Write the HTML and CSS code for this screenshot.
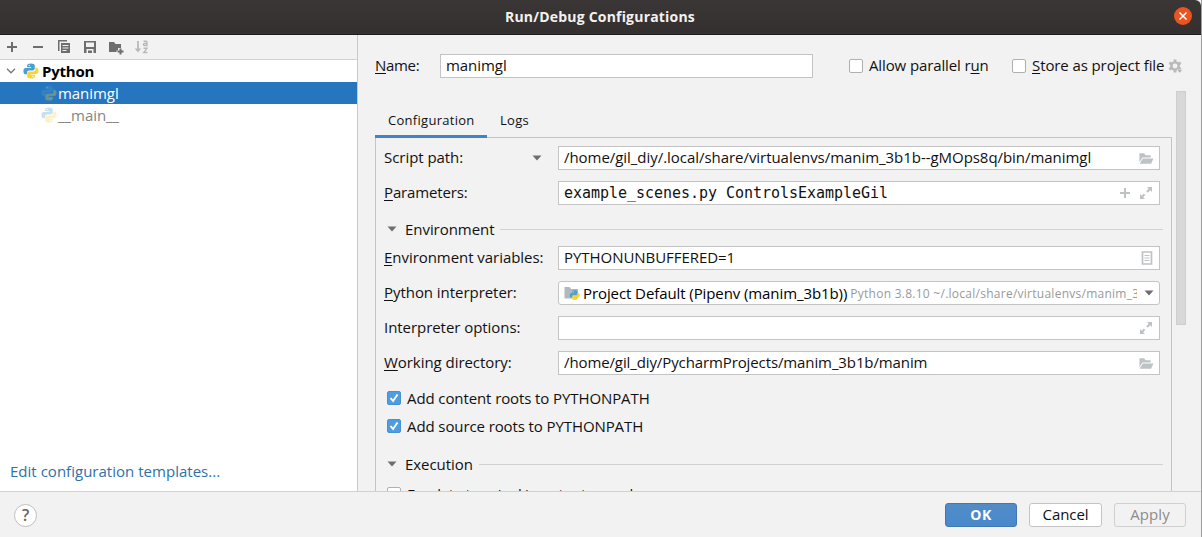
FILE: index.html
```
<!DOCTYPE html>
<html lang="en">
<head>
<meta charset="utf-8">
<title>Run/Debug Configurations</title>
<link rel="stylesheet" href="styles.css">
</head>
<body>
<svg width="0" height="0" class="defs">
  <symbol id="python" viewBox="0.6 0.6 14.8 14.8">
    <path fill="#4b9fcf" d="M7.900 1C5.600 1 4.400 1.700 4.400 3v1.600h3.800v.7H3C1.600 5.300 1 6.500 1 8.200s.7 2.900 2 2.900h1.300V9.400c0-1.100.9-1.900 2-1.900h3.300c1 0 1.900-.7 1.900-1.700V3c0-1.300-1.400-2-3.600-2z"/>
    <path fill="#ffd42b" d="M8.100 15c2.300 0 3.500-.7 3.500-2v-1.600H7.800v-.7H13c1.400 0 2-1.200 2-2.900s-.7-2.900-2-2.900h-1v1.700c0 1.100-.9 1.900-2 1.900H6.500c-1 0-2 .7-2 1.700V13c0 1.300 1.400 2 3.600 2z"/>
    <circle cx="6.300" cy="2.900" r=".6" fill="#fff"/><circle cx="9.700" cy="13.100" r=".6" fill="#fff"/>
  </symbol>
  <symbol id="folder" viewBox="0 0 16 16">
    <path fill="#bdc2c5" d="M1 2.500h5l1.500 2H13V7H4.200L1 12z"/><path fill="#bdc2c5" d="M4.600 8H16l-2.600 5.500H1.200z"/>
  </symbol>
  <symbol id="expand" viewBox="0 0 14 14">
    <path fill="#bdc2c5" d="M8 1h5v5l-1.700-1.700-2.600 2.500-1.500-1.500 2.500-2.600zM1 13V8l1.700 1.700 2.100-2.100 1.500 1.500-2.100 2.200L6 13z"/>
  </symbol>
  <symbol id="down" viewBox="0 0 10 6"><path fill="#6e6e6e" d="M.5.5h9L5 5.500z"/></symbol>
</svg>
<div class="window">
  <header class="titlebar">
    <span class="title">Run/Debug Configurations</span>
    <span class="close"><svg width="10" height="10" viewBox="0 0 10 10"><path d="M1.500 1.500l7 7m0-7l-7 7" stroke="#fff" stroke-width="1.500"/></svg></span>
  </header>
  <div class="main">
    <aside class="sidebar">
      <div class="toolbar">
        <svg viewBox="0 0 16 16"><path d="M8 3v10M3 8h10" stroke="#6e6e6e" stroke-width="2"/></svg>
        <svg viewBox="0 0 16 16"><path d="M3 8h10" stroke="#6e6e6e" stroke-width="2"/></svg>
        <svg viewBox="0 0 16 16"><path fill="#6e6e6e" d="M2 1h9v1.500H3.500V12H2z"/><path fill="#6e6e6e" fill-rule="evenodd" d="M5 4h9v10H5zM6.500 6v1h6V6zm0 2.500v1h6v-1zm0 2.500v1h4v-1z"/></svg>
        <svg viewBox="0 0 16 16"><path fill="#6e6e6e" fill-rule="evenodd" d="M2 2h12v12H2zM4 3.500V8h8V3.500zM4.500 10v4h7v-4zM6 11.500h4V14H6z"/></svg>
        <svg viewBox="0 0 16 16"><path fill="#6e6e6e" d="M1 3h5l1.500 2H13v4h-3v2.500H8.500V13H1z"/><path d="M12.500 9.500v6M9.500 12.500h6" stroke="#6e6e6e" stroke-width="2"/></svg>
        <svg class="sort" viewBox="0 0 16 16" fill="none" stroke="#b9b9b9"><path d="M4 2v9" stroke-width="1.800"/><path d="M.8 9.500h6.400L4 13.500z" fill="#b9b9b9" stroke="none"/><path d="M9.500 2.300h2.700q.8 0 .8.800v3.400h-2.600q-1 0-1-1t1-1H13M9.500 9.300h3.400l-3.200 4.200h3.800" stroke-width="1.400"/></svg>
      </div>
      <ul class="tree">
        <li class="row root"><svg class="chev" viewBox="0 0 10 6"><path d="M1 .8l4 4 4-4" fill="none" stroke="#777" stroke-width="1.300"/></svg><svg class="py"><use href="#python"/></svg><b>Python</b></li>
        <li class="row child selected"><svg class="py faded"><use href="#python"/></svg><span>manimgl</span></li>
        <li class="row child muted"><svg class="py faded"><use href="#python"/></svg><span>__main__</span></li>
      </ul>
      <a class="link">Edit configuration templates...</a>
    </aside>
    <section class="editor">
      <div class="namebar">
        <label class="namelabel"><u>N</u>ame:</label>
        <div class="field namefield"><span>manimgl</span></div>
        <span class="check"></span><span class="parallel">Allow parallel r<u>u</u>n</span>
        <span class="check"></span><span class="store"><u>S</u>tore as project file</span>
        <svg class="gear" viewBox="0 0 16 16"><g stroke="#bababa" fill="none"><circle cx="7.500" cy="7.500" r="3.900" stroke-width="2.600"/><path d="M7.500 .5v3M7.500 11.500v3M1.400 4l2.500 1.400M11.100 9.600l2.500 1.400M1.400 11l2.500-1.400M11.100 5.400L13.600 4" stroke-width="3"/></g><path d="M9.500 11.500h6l-3 3.500z" fill="#aaa" stroke="#f2f2f2" stroke-width=".6"/></svg>
      </div>
      <div class="content">
        <div class="tabbed">
          <nav class="tabs"><span class="tab active">Configuration</span><span class="tab">Logs</span></nav>
          <div class="form">
            <div class="line"><label>Script path:</label><svg class="tri pick"><use href="#down"/></svg><div class="field"><span class="path">/home/gil_diy/.local/share/virtualenvs/manim_3b1b--gMOps8q/bin/manimgl</span><svg class="icon"><use href="#folder"/></svg></div></div>
            <div class="line"><label class="params"><u>P</u>arameters:</label><div class="field mono"><span>example_scenes.py ControlsExampleGil</span><svg class="plus" viewBox="0 0 12 12"><path d="M6 1v10M1 6h10" stroke="#bdc2c5" stroke-width="2"/></svg><svg class="exp"><use href="#expand"/></svg></div></div>
            <div class="group"><svg class="tri"><use href="#down"/></svg><span>Environment</span><i></i></div>
            <div class="line"><label><u>E</u>nvironment variables:</label><div class="field"><span>PYTHONUNBUFFERED=1</span><svg class="doc" viewBox="0 0 12 14"><path d="M1.500 1h9v12h-9z" fill="none" stroke="#bdc2c5" stroke-width="1.700"/><path d="M3.500 4.500h5M3.500 7h5M3.500 9.500h5" stroke="#bdc2c5"/></svg></div></div>
            <div class="line"><label class="up"><u>P</u>ython interpreter:</label><div class="field combo"><svg class="env" viewBox="0 0 16 16"><path d="M.5 2h5L7 4h7v9.500H.5z" fill="#afb9bf"/><svg x="5.500" y="5" width="10.500" height="10.500"><use href="#python"/></svg></svg><span class="sdk">Project Default (Pipenv (manim_3b1b))</span><span class="ver">Python 3.8.10 ~/.local/share/virtualenvs/manim_3</span><svg class="tri"><use href="#down"/></svg></div></div>
            <div class="line"><label>Interpreter options:</label><div class="field"><span></span><svg class="exp"><use href="#expand"/></svg></div></div>
            <div class="line"><label><u>W</u>orking directory:</label><div class="field"><span class="dir">/home/gil_diy/PycharmProjects/manim_3b1b/manim</span><svg class="icon"><use href="#folder"/></svg></div></div>
            <div class="option first"><span class="check on"><svg viewBox="0 0 14 14"><path d="M3.500 7l2.600 3L10.500 3.500" fill="none" stroke="#fff" stroke-width="1.900"/></svg></span><span>Add content roots to PYTHONPATH</span></div>
            <div class="option"><span class="check on"><svg viewBox="0 0 14 14"><path d="M3.500 7l2.600 3L10.500 3.500" fill="none" stroke="#fff" stroke-width="1.900"/></svg></span><span>Add source roots to PYTHONPATH</span></div>
            <div class="group exec"><svg class="tri"><use href="#down"/></svg><span>Execution</span><i></i></div>
            <div class="option last"><span class="check"></span><span>Emulate terminal in output console</span></div>
          </div>
        </div>
        <div class="scrollbar"></div>
      </div>
    </section>
  </div>
  <footer class="footer">
    <span class="help">?</span>
    <button class="btn primary">OK</button>
    <button class="btn cancel">Cancel</button>
    <button class="btn disabled">Apply</button>
  </footer>
</div>
</body>
</html>
```
FILE: styles.css
```
* { box-sizing: border-box; }
body { margin: 0; overflow: hidden; background: #f2f2f2; color: #111; font: 15px/20px "Open Sans", "Noto Sans", sans-serif; letter-spacing: -0.05px; white-space: nowrap; }
.defs { position: absolute; }
svg { flex: none; display: block; }
u { text-decoration: underline; text-decoration-thickness: 1px; text-underline-offset: 2px; text-decoration-skip-ink: none; }

.window { width: 1202px; height: 537px; display: flex; flex-direction: column; border-right: 1px solid #9d9d9d; }
.titlebar { height: 35px; flex: none; display: grid; grid-template-columns: 1fr auto 1fr; align-items: center; padding: 0 9px 2px 0; background: linear-gradient(#393635, #33302f); border-bottom: 1px solid #1f1d1d; border-radius: 0 6px 0 0; }
.title { grid-column: 2; padding: 1px 0 0 8px; color: #f3f1ef; font-size: 14px; font-weight: 700; letter-spacing: .2px; }
.close { justify-self: end; width: 18px; height: 18px; border-radius: 50%; background: #e95420; display: grid; place-items: center; }

.main { height: 456px; flex: none; display: flex; }
.sidebar { width: 358px; display: flex; flex-direction: column; background: #fff; border-right: 1px solid #c9c9c9; }
.toolbar { height: 25px; flex: none; display: flex; align-items: center; gap: 10px; padding-left: 4px; background: #f2f2f2; border-bottom: 1px solid #d1d1d1; }
.toolbar svg { width: 16px; height: 16px; }
.tree { list-style: none; margin: 0; padding: 0; flex: 1; }
.row { height: 22px; display: flex; align-items: center; }
.root { padding-left: 6px; color: #000; }
.root b { letter-spacing: -.2px; margin-left: 3px; }
.chev { width: 10px; height: 6px; margin-right: 7px; }
.py { width: 16px; height: 16px; }
.child { padding-left: 41px; }
.child span { margin-left: 1px; }
.faded { opacity: .3; }
.selected { background: #2675bf; color: #fff; }
.muted { color: #858585; }
.link { padding: 0 0 10px 10px; color: #2e71a8; letter-spacing: .02px; }

.editor { flex: 1; padding-left: 17px; display: flex; flex-direction: column; overflow: hidden; }
.namebar { display: flex; align-items: center; height: 24px; margin-top: 19px; flex: none; }
.namelabel { width: 65px; letter-spacing: -.3px; padding-bottom: 2px; }
.field { display: flex; align-items: center; height: 24px; background: #fff; border: 1px solid #c4c4c4; padding-left: 5px; flex: 1; min-width: 0; }
.field > span:first-child { flex: 1; padding-bottom: 2px; }
.namefield { flex: none; width: 373px; margin-right: 36px; }
.check { width: 14px; height: 14px; flex: none; background: #fff; border: 1px solid #b0b0b0; border-radius: 2px; }
.check.on { background: #4e9de0; border-color: #4891cf; }
.check.on svg { margin: -1px; width: 14px; height: 14px; }
.parallel { width: 143px; margin-left: 6px; padding-bottom: 2px; letter-spacing: -.12px; }
.store { width: 136px; margin-left: 6px; padding-bottom: 2px; letter-spacing: -.1px; }
.gear { width: 15px; height: 15px; }

.content { display: flex; flex: 1; margin-top: 13px; min-height: 0; }
.tabbed { width: 797px; display: flex; flex-direction: column; padding-top: 13px; }
.tabs { display: flex; height: 33px; flex: none; color: #111; font-size: 13px; letter-spacing: .28px; }
.tab { padding: 6px 13px 0; }
.active { width: 112px; border-bottom: 3px solid #4083c9; margin-bottom: -1px; z-index: 1; }
.form { flex: 1; border: 1px solid #c4c4c4; border-bottom: 0; padding: 8px 11px 0 8px; min-height: 0; overflow: hidden; }
.line { display: flex; align-items: center; height: 24px; margin-bottom: 11px; }
.line label { width: 174px; padding-bottom: 2px; }
.line label.up { padding-bottom: 3px; }
.line label:has(+ .pick) { width: 148px; }
.tri { width: 10px; height: 6px; }
.pick { margin-right: 16px; }
.line label.params { padding-bottom: 2px; letter-spacing: -.15px; }
.path { letter-spacing: -.045px; }
.dir { letter-spacing: -.11px; }
.field.mono { font-family: "DejaVu Sans Mono", monospace; letter-spacing: -.03px; }
.field.mono > span:first-child { padding-bottom: 0; }
.icon { width: 16px; height: 15px; margin-right: 5px; }
.plus { width: 12px; height: 12px; margin-right: 8px; }
.exp { width: 14px; height: 14px; margin-right: 6px; }
.doc { width: 12px; height: 14px; margin-right: 6px; }
.combo { border-radius: 3px; padding-right: 5px; }
.env { width: 16px; height: 16px; margin-right: 3px; }
.sdk { letter-spacing: -.09px; color: #000; }
.ver { flex: 1; min-width: 0; overflow: hidden; margin: 1px 7px 0 3px; color: #999; font-size: 12px; letter-spacing: .26px; }
.group { display: flex; align-items: center; height: 20px; margin: 14px -3px 7px 3px; }
.group span { margin: 0 6px 0 8px; padding-bottom: 1px; }
.group i { flex: 1; height: 1px; background: #d1d1d1; }
.option { display: flex; align-items: center; height: 28px; padding-left: 3px; letter-spacing: -.1px; }
.option span + span { margin-left: 6px; padding-bottom: 1px; }
.option.first { margin-top: -2px; }
.option.last { letter-spacing: -.35px; }
.exec { margin-top: 14px; margin-bottom: 6px; }
.scrollbar { width: 10px; height: 234px; margin-left: 4px; background: #d8d8d8; border: 1px solid #cecece; }

.footer { flex: 1; display: flex; align-items: center; border-top: 1px solid #d1d1d1; padding: 1px 15px 0 14px; }
.help { width: 23px; height: 23px; margin-right: auto; display: grid; place-items: center; border: 1px solid #c0c0c0; border-radius: 50%; background: #fff; color: #666; font-size: 16px; font-weight: 600; }
.btn { width: 72px; height: 24px; margin-left: 12px; padding: 0 0 2px; border: 1px solid #c4c4c4; border-radius: 3px; background: #fff; color: #111; font: 15px/20px "Open Sans", sans-serif; letter-spacing: -.1px; }
.primary { padding-bottom: 0; background: linear-gradient(#528cc7, #4989cc); border-color: #4078b0; color: #fff; font-size: 14px; font-weight: 700; letter-spacing: .5px; }
.cancel { width: 73px; }
.disabled { background: #f2f2f2; border-color: #cfcfcf; color: #8c8c8c; letter-spacing: .1px; }
```
